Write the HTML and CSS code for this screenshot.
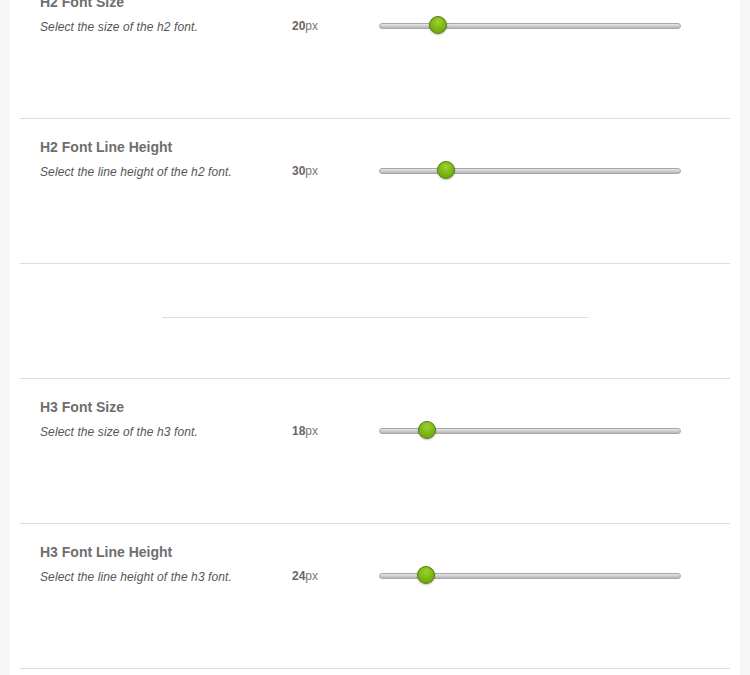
FILE: index.html
```html
<!DOCTYPE html>
<html>
<head>
<meta charset="utf-8">
<link rel="stylesheet" href="styles.css">
</head>
<body>
<div class="panel">
  <div class="options">
    <div class="option">
      <div class="info">
        <h4 class="title">H2 Font Size</h4>
        <p class="desc">Select the size of the h2 font.</p>
      </div>
      <div class="value"><b>20</b>px</div>
      <div class="slider"><div class="track"></div><span class="knob" style="left: 59px"></span></div>
    </div>
    <div class="option">
      <div class="info">
        <h4 class="title">H2 Font Line Height</h4>
        <p class="desc">Select the line height of the h2 font.</p>
      </div>
      <div class="value"><b>30</b>px</div>
      <div class="slider"><div class="track"></div><span class="knob" style="left: 67px"></span></div>
    </div>
    <div class="option divider-row">
      <hr class="divider">
    </div>
    <div class="option">
      <div class="info">
        <h4 class="title">H3 Font Size</h4>
        <p class="desc">Select the size of the h3 font.</p>
      </div>
      <div class="value"><b>18</b>px</div>
      <div class="slider"><div class="track"></div><span class="knob" style="left: 48px"></span></div>
    </div>
    <div class="option">
      <div class="info">
        <h4 class="title">H3 Font Line Height</h4>
        <p class="desc">Select the line height of the h3 font.</p>
      </div>
      <div class="value"><b>24</b>px</div>
      <div class="slider"><div class="track"></div><span class="knob" style="left: 47px"></span></div>
    </div>
  </div>
</div>
</body>
</html>
```

FILE: styles.css
```css
html, body {
  margin: 0;
  padding: 0;
  background: #f7f7f7;
  height: 100%;
  overflow: hidden;
}
body {
  font-family: "Liberation Sans", Arial, sans-serif;
}
.panel {
  margin: 0 10px;
  background: #fff;
  min-height: 100%;
  padding: 0 10px 40px;
}
.options {
  margin-top: -26px;
}
.option {
  height: 144px;
  border-bottom: 1px solid #dedede;
  display: flex;
  align-items: flex-start;
  padding: 0 20px;
}
.info {
  width: 252px;
  flex: none;
}
.title {
  margin: 20px 0 0;
  font-size: 14px;
  line-height: 16px;
  font-weight: bold;
  color: #6e6e6e;
}
.desc {
  margin: 10px 0 0;
  font-size: 12px;
  line-height: 14px;
  font-style: italic;
  color: #555;
  letter-spacing: 0.1px;
}
.value {
  width: 87px;
  flex: none;
  margin-top: 45px;
  font-size: 12px;
  line-height: 14px;
  color: #777;
}
.value b {
  color: #666;
}
.slider {
  position: relative;
  width: 302px;
  height: 18px;
  margin-top: 43px;
  flex: none;
}
.track {
  margin-top: 6px;
  height: 4px;
  border: 1px solid #a8a8a8;
  border-radius: 4px;
  background: linear-gradient(#e8e8e8, #b5b5b5);
}
.knob {
  position: absolute;
  top: -1px;
  width: 16px;
  height: 16px;
  margin-left: -9px;
  border-radius: 50%;
  border: 1px solid #4f7d0a;
  background: radial-gradient(circle at 50% 30%, #9ed034 0%, #7ab512 55%, #669d08 100%);
  box-shadow: 0 1px 2px rgba(0,0,0,0.25);
}
.divider-row {
  height: 114px;
  align-items: center;
  justify-content: center;
}
.divider {
  width: 426px;
  margin: 0;
  border: 0;
  border-top: 1px solid #dedede;
  position: relative;
  top: -4px;
}
```
